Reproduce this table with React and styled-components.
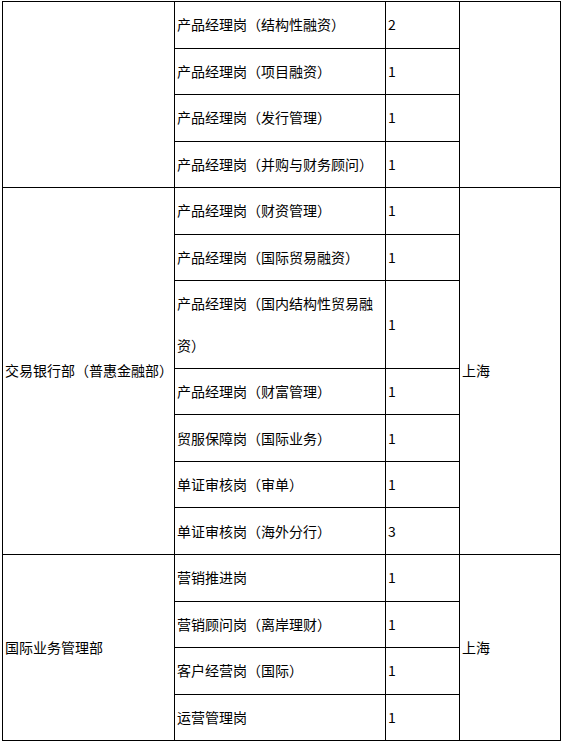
import styled, { createGlobalStyle } from "styled-components";

const GlobalStyle = createGlobalStyle`
  html, body {
    margin: 0;
    padding: 0;
    background: #fff;
  }
`;

const Page = styled.div`
  padding: 1px 0 0 2px;
`;

const Table = styled.table`
  border-collapse: collapse;
  table-layout: fixed;
  width: 558px;
  font-family: "Noto Sans CJK SC", "Microsoft YaHei", sans-serif;
  font-size: 14px;
  color: #000;
`;

const Col = styled.col`
  width: ${(p) => p.$w}px;
`;

const Cell = styled.td`
  border: 1px solid #000;
  padding: 2.1px 2px;
  line-height: 41.33px;
  vertical-align: middle;
  text-align: left;
  word-break: break-all;
`;

const colWidths = [172, 211, 74, 101];

const jobs = [
  {
    dept: "",
    city: "",
    rows: [
      ["产品经理岗（结构性融资）", 2],
      ["产品经理岗（项目融资）", 1],
      ["产品经理岗（发行管理）", 1],
      ["产品经理岗（并购与财务顾问）", 1],
    ],
  },
  {
    dept: "交易银行部（普惠金融部）",
    city: "上海",
    rows: [
      ["产品经理岗（财资管理）", 1],
      ["产品经理岗（国际贸易融资）", 1],
      ["产品经理岗（国内结构性贸易融资）", 1],
      ["产品经理岗（财富管理）", 1],
      ["贸服保障岗（国际业务）", 1],
      ["单证审核岗（审单）", 1],
      ["单证审核岗（海外分行）", 3],
    ],
  },
  {
    dept: "国际业务管理部",
    city: "上海",
    rows: [
      ["营销推进岗", 1],
      ["营销顾问岗（离岸理财）", 1],
      ["客户经营岗（国际）", 1],
      ["运营管理岗", 1],
    ],
  },
];

export default function App() {
  return (
    <>
      <GlobalStyle />
      <Page>
        <Table>
          <colgroup>
            {colWidths.map((w, i) => (
              <Col key={i} $w={w} />
            ))}
          </colgroup>
          <tbody>
            {jobs.map((group, g) =>
              group.rows.map(([post, num], i) => (
                <tr key={`${g}-${i}`}>
                  {i === 0 && <Cell rowSpan={group.rows.length}>{group.dept}</Cell>}
                  <Cell>{post}</Cell>
                  <Cell>{num}</Cell>
                  {i === 0 && <Cell rowSpan={group.rows.length}>{group.city}</Cell>}
                </tr>
              ))
            )}
          </tbody>
        </Table>
      </Page>
    </>
  );
}
